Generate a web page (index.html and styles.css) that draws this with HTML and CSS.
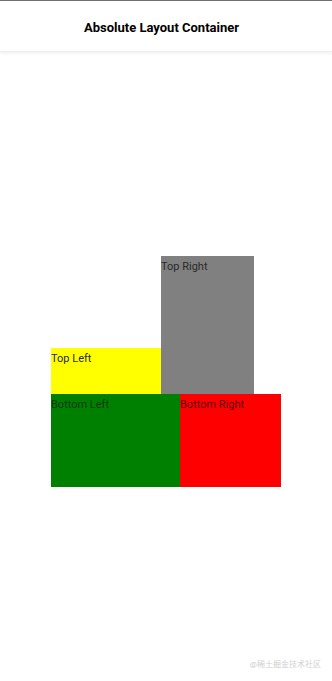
FILE: index.html
```html
<!DOCTYPE html>
<html>
<head>
<meta charset="utf-8">
<link rel="stylesheet" href="styles.css">
</head>
<body>
<div class="app">
  <header class="appbar"><h1 class="title">Absolute Layout Container</h1></header>
  <main class="content">
    <div class="canvas">
      <div class="box gray">Top Right</div>
      <div class="box yellow">Top Left</div>
      <div class="box green">Bottom Left</div>
      <div class="box red">Bottom Right</div>
    </div>
  </main>
  <div class="watermark">@稀土掘金技术社区</div>
</div>
</body>
</html>
```
FILE: styles.css
```css
html, body { margin: 0; padding: 0; }
body { width: 332px; height: 681px; background: #fff; font-family: Roboto, "Noto Sans CJK SC", sans-serif; overflow: hidden; }
.app { height: 681px; display: flex; flex-direction: column; position: relative; }
.appbar { height: 52px; border-top: 1px solid #707070; box-sizing: border-box; display: flex; align-items: center; justify-content: center; padding-right: 9px; box-shadow: 0 1px 3px rgba(0,0,0,0.08); border-bottom: 1px solid #f0f0f0; }
.title { margin: 0; font-size: 13px; font-weight: 700; color: #000; padding-top: 2px; }
.content { flex: 1; padding-top: 204px; padding-left: 51px; }
.canvas { display: grid; grid-template-columns: 110px 19px 74px 27px; grid-template-rows: 92px 46px 93px; }
.box { font-size: 11px; color: #2a2a2a; line-height: 13px; padding-top: 4px; box-sizing: border-box; }
.gray { background: #808080; grid-column: 2 / 4; grid-row: 1 / 3; }
.yellow { background: #ffff00; grid-column: 1 / 2; grid-row: 2 / 3; }
.green { background: #008000; grid-column: 1 / 3; grid-row: 3 / 4; color: #0a3a0a; }
.red { background: #ff0000; grid-column: 3 / 5; grid-row: 3 / 4; color: #5a0000; }
.watermark { position: absolute; right: 11px; bottom: 12px; font-size: 8px; color: #d0d0d0; }
```
